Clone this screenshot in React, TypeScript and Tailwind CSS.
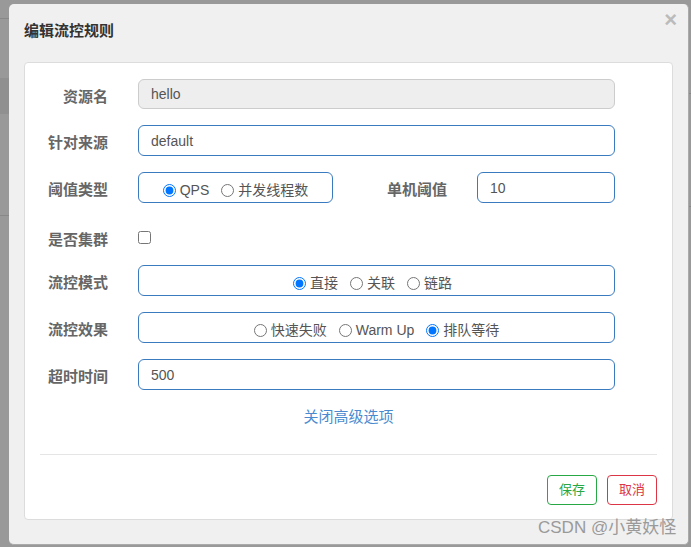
import React from 'react';

const font = { fontFamily: '"Liberation Sans", "Noto Sans CJK SC", sans-serif' };

function Label({ children, w = 'w-[83px]' }: { children: React.ReactNode; w?: string }) {
    return (
        <div className={`${w} shrink-0 text-right text-[15px] font-bold text-[#666] leading-[20px] pt-[5px]`}>
            {children}
        </div>
    );
}

function Radio({ label, checked }: { label: string; checked?: boolean }) {
    return (
        <label className="flex items-center gap-[4px] text-[14px] text-[#555]">
            <input type="radio" defaultChecked={checked} className="m-0 w-[13px] h-[13px]" />
            <span>{label}</span>
        </label>
    );
}

function RadioBox({ items, checked, w, pr = '' }: { items: string[]; checked: number; w: string; pr?: string }) {
    return (
        <div className={`${w} ${pr} h-[31px] pt-[5px] border border-[#3a7bbf] rounded-[6px] flex items-center justify-center gap-[12px]`}>
            {items.map((it, i) => (
                <Radio key={it} label={it} checked={i === checked} />
            ))}
        </div>
    );
}

export default function App() {
    return (
        <div className="relative w-[691px] h-[547px] bg-[#999999] overflow-hidden" style={font}>
            {/* page behind the overlay */}
            <div className="absolute left-0 top-[18px] w-[10px] h-px bg-[#888]" />
            <div className="absolute left-0 top-[78px] w-[10px] h-[36px] bg-[#909090]" />
            <div className="absolute left-0 top-[215px] w-[10px] h-px bg-[#888]" />
            <div className="absolute right-0 top-[93px] w-[4px] h-px bg-[#888]" />
            <div className="absolute right-0 top-[206px] w-[4px] h-px bg-[#888]" />

            <div className="pt-[4px] pl-[9px]">
                <div className="relative w-[680px] h-[541px] bg-[#f0f0f0] rounded-[5px] border-b border-r border-[#aaa]">
                    <div className="h-[58px] flex items-center px-[15px] pb-[3px]">
                        <h4 className="text-[15px] font-bold text-[#333]">编辑流控规则</h4>
                    </div>
                    <button className="absolute right-[11px] top-[2px] text-[22px] leading-[28px] font-bold text-[#bbb]">×</button>

                    <div className="mx-[15px] h-[458px] bg-white border border-[#dcdcdc] rounded-[4px] pt-[16px] flex flex-col">
                        <div className="flex items-center">
                            <Label>资源名</Label>
                            <div className="ml-[30px] w-[477px] h-[30px] bg-[#eeeeee] border border-[#cccccc] rounded-[6px] px-[12px] flex items-center text-[14px] text-[#555]">
                                hello
                            </div>
                        </div>

                        <div className="flex items-center mt-[16px]">
                            <Label>针对来源</Label>
                            <input
                                defaultValue="default"
                                className="ml-[30px] w-[477px] h-[31px] border border-[#3a7bbf] rounded-[6px] px-[12px] text-[14px] text-[#555] outline-none"
                            />
                        </div>

                        <div className="flex items-center mt-[16px]">
                            <Label>阈值类型</Label>
                            <div className="ml-[30px]">
                                <RadioBox w="w-[195px]" items={['QPS', '并发线程数']} checked={0} />
                            </div>
                            <Label w="w-[114px]">单机阈值</Label>
                            <input
                                defaultValue="10"
                                className="ml-[30px] w-[138px] h-[31px] border border-[#3a7bbf] rounded-[6px] px-[12px] text-[14px] text-[#555] outline-none"
                            />
                        </div>

                        <div className="flex items-center mt-[19px] h-[31px]">
                            <Label>是否集群</Label>
                            <input type="checkbox" className="ml-[30px] m-0 w-[13px] h-[13px]" />
                        </div>

                        <div className="flex items-center mt-[12px]">
                            <Label>流控模式</Label>
                            <div className="ml-[30px]">
                                <RadioBox w="w-[477px]" pr="pr-[8px]" items={['直接', '关联', '链路']} checked={0} />
                            </div>
                        </div>

                        <div className="flex items-center mt-[16px]">
                            <Label>流控效果</Label>
                            <div className="ml-[30px]">
                                <RadioBox w="w-[477px]" items={['快速失败', 'Warm Up', '排队等待']} checked={2} />
                            </div>
                        </div>

                        <div className="flex items-center mt-[16px]">
                            <Label>超时时间</Label>
                            <input
                                defaultValue="500"
                                className="ml-[30px] w-[477px] h-[31px] border border-[#3a7bbf] rounded-[6px] px-[12px] text-[14px] text-[#555] outline-none"
                            />
                        </div>

                        <div className="mt-[17px] text-center text-[15px] leading-[20px] text-[#4a8bd0]">
                            <a className="cursor-pointer">关闭高级选项</a>
                        </div>

                        <div className="mt-[27px] mx-[15px] h-px bg-[#e5e5e5]" />

                        <div className="mt-[20px] flex justify-end gap-[10px] pr-[15px]">
                            <button className="w-[50px] h-[30px] border border-[#28a745] rounded-[4px] text-[13px] text-[#28a745] bg-white">
                                保存
                            </button>
                            <button className="w-[50px] h-[30px] border border-[#dc3545] rounded-[4px] text-[13px] text-[#dc3545] bg-white">
                                取消
                            </button>
                        </div>
                    </div>
                </div>
            </div>

            <div className="absolute left-[538px] top-[516px] text-[17px] leading-[24px] text-[#9a9a9a]">
                CSDN @小黄妖怪
            </div>
        </div>
    );
}
